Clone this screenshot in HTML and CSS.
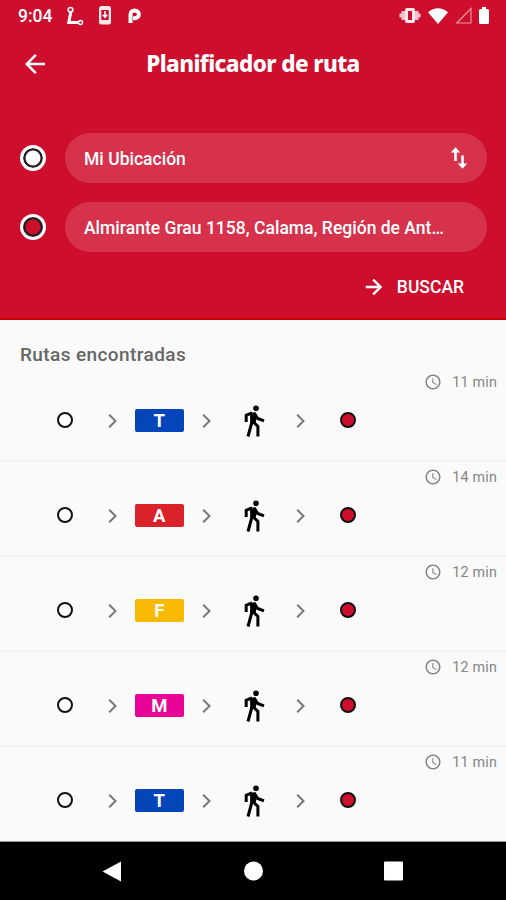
FILE: index.html
```html
<!DOCTYPE html>
<html lang="es">
<head>
    <meta charset="UTF-8">
    <meta name="viewport" content="width=device-width, initial-scale=1.0">
    <title>Planificador de ruta</title>
    <link rel="stylesheet" href="styles.css">
</head>
<body>
    <!-- shared icons -->
    <svg width="0" height="0" class="defs">
        <symbol id="chevron" viewBox="0 0 10 14"><path d="M1.2 .7 7.500 7l-6.300 6.300" fill="none" stroke="#777" stroke-width="2"/></symbol>
        <symbol id="walk" viewBox="0 0 22 32">
            <circle cx="12" cy="3.300" r="2.800"/>
            <path d="M6 8 11.500 7l1.500 4.500-1.500 7H6.300z"/>
            <path d="M2.200 17V10.200L8 8M8.500 15 7 20.500 4 31.500M9.300 17l4.600 4.500v10M10.500 8.500l3.200 5 6.300 2.300" fill="none" stroke="#000" stroke-width="3"/>
        </symbol>
        <symbol id="clock" viewBox="0 0 24 24"><path d="M11.990 2C6.470 2 2 6.480 2 12s4.470 10 9.990 10C17.520 22 22 17.520 22 12S17.520 2 11.990 2zM12 20c-4.420 0-8-3.580-8-8s3.580-8 8-8 8 3.580 8 8-3.580 8-8 8zm.5-13H11v6l5.250 3.150.75-1.230-4.500-2.670z"/></symbol>
        <symbol id="arrow" viewBox="0 0 24 24"><path d="M12 4l-1.410 1.410L16.170 11H4v2h12.170l-5.580 5.590L12 20l8-8z"/></symbol>
    </svg>

    <header class="planner">
        <div class="status-bar">
            <span class="time">9:04</span>
            <svg class="status-route" width="18" height="20" viewBox="0 0 18 20" fill="none" stroke="#fff">
                <circle cx="4.500" cy="3.800" r="2.300" stroke-width="1.700"/>
                <path d="M4.800 6 2.800 16.500H12" stroke-width="3"/>
                <circle cx="14.500" cy="16.500" r="2" stroke-width="1.500"/>
            </svg>
            <svg class="status-phone" width="12" height="19" viewBox="0 0 12 19">
                <rect width="12" height="18.500" rx="2.500" fill="#fff" opacity=".9"/>
                <path d="M2.300 4h7.400v10H2.300z" fill="#ce0e2d"/>
                <path d="M5.200 5h1.600v3.700H9L6 12.500 3 8.700h2.200z" fill="#fff"/>
            </svg>
            <svg class="status-parking" width="13" height="16" viewBox="0 0 13 16">
                <path d="M2.500 15V6.500a4.200 3.900 0 1 1 4.200 3.700H5" fill="none" stroke="#fff" stroke-width="4"/>
            </svg>
            <div class="system-icons">
                <svg width="22" height="15" viewBox="0 0 22 15" fill="#fff">
                    <rect x="6" y="0" width="10" height="15" rx="2" opacity=".9"/>
                    <path d="M9 3h4v9H9z" fill="#ce0e2d"/>
                    <path d="M2.500 3H6v9H2.500zM16 3h3.500v9H16zM.5 5.500h2v4h-2zM19.500 5.500h2v4h-2z" opacity=".75"/>
                </svg>
                <svg width="20" height="16" viewBox="0 0 20 16" fill="#fff"><path d="M0 4.200Q10-3.500 20 4.200L10 16z"/></svg>
                <svg width="17" height="17" viewBox="0 0 17 17" fill="none" stroke="#fff" opacity=".55"><path d="M16 1.500V16H1.700z" stroke-width="1.200"/></svg>
                <svg width="10" height="17" viewBox="0 0 10 17" fill="#fff"><path d="M3 0h4v2h1.500A1.500 1.500 0 0 1 10 3.500v12A1.500 1.500 0 0 1 8.500 17h-7A1.500 1.500 0 0 1 0 15.500v-12A1.500 1.500 0 0 1 1.500 2H3z"/></svg>
            </div>
        </div>

        <div class="title-bar">
            <svg class="back" width="30" height="30" viewBox="0 0 24 24"><use href="#arrow"/></svg>
            <h1>Planificador de ruta</h1>
        </div>

        <div class="field">
            <span class="marker"></span>
            <div class="input">
                <span class="input-text">Mi Ubicación</span>
                <svg class="swap" width="18" height="24" viewBox="0 0 18 24">
                    <path d="M5.500 15V4M12.500 9.500V20" fill="none" stroke="#fff" stroke-width="2.600"/>
                    <path d="M.8 6.500 5.500 1.200l4.700 5.300zM7.800 17.500l4.700 5.300 4.700-5.300z" fill="#fff"/>
                </svg>
            </div>
        </div>
        <div class="field">
            <span class="marker marker-end"></span>
            <div class="input">
                <span class="input-text">Almirante Grau 1158, Calama, Región de Ant…</span>
            </div>
        </div>

        <div class="search">
            <svg width="24" height="24" viewBox="0 0 24 24" fill="#fff" stroke="#fff" stroke-width=".5"><use href="#arrow"/></svg>
            <span class="search-label">BUSCAR</span>
        </div>
    </header>

    <main>
        <h2>Rutas encontradas</h2>
        <div id="routes"></div>
    </main>

    <nav class="android-nav">
        <svg width="20" height="21" viewBox="0 0 20 21" fill="#fff"><path d="M19 .5v20L.5 10.500z"/></svg>
        <svg width="20" height="20" viewBox="0 0 20 20" fill="#fff"><circle cx="10.500" cy="10" r="9.500"/></svg>
        <svg width="20" height="20" viewBox="0 0 20 20" fill="#fff"><rect y=".5" width="19" height="19" rx="1"/></svg>
    </nav>

    <script src="routes.js"></script>
</body>
</html>
```
FILE: styles.css
```css
* {
    box-sizing: border-box;
}
body {
    margin: 0;
    height: 900px;
    display: flex;
    flex-direction: column;
    overflow: hidden;
    background: #fafafa;
    font-family: Roboto, sans-serif;
}
svg {
    display: block;
    flex-shrink: 0;
}
.defs {
    position: absolute;
}
.planner {
    height: 320px;
    flex-shrink: 0;
    background: #ce0e2d;
    border-bottom: 2px solid #cb0008;
    color: #fff;
}
.status-bar {
    display: flex;
    align-items: center;
    height: 31px;
    padding: 0 17px 0 18px;
}
.time {
    width: 48px;
    font-size: 17.500px;
    font-weight: 500;
    line-height: 32px;
}
.status-phone {
    margin-left: 15px;
}
.status-parking {
    margin-left: 17px;
}
.system-icons {
    display: flex;
    align-items: center;
    gap: 7px;
    margin-left: auto;
}
.title-bar {
    display: grid;
    grid-template-columns: 30px 1fr 30px;
    align-items: center;
    height: 66px;
    padding: 0 20px;
}
.back {
    fill: #fff;
    transform: rotate(180deg);
}
h1 {
    margin: 0;
    text-align: center;
    font-family: "Noto Sans", sans-serif;
    font-size: 22.500px;
    font-weight: 800;
    letter-spacing: -.6px;
    line-height: 30px;
    white-space: nowrap;
}
.field {
    display: flex;
    align-items: center;
    gap: 19px;
    height: 50px;
    padding: 0 19px 0 20px;
    margin-bottom: 19px;
}
.title-bar + .field {
    margin-top: 36px;
}
.marker {
    width: 26px;
    height: 26px;
    border: 3px solid #fff;
    border-radius: 50%;
    background: #fff;
    box-shadow: inset 0 0 0 2.500px #222;
}
.marker-end {
    background: #ce0e2d;
}
.input {
    flex: 1;
    display: flex;
    align-items: center;
    justify-content: space-between;
    height: 50px;
    padding: 0 19px;
    border-radius: 25px;
    background: #d6324b;
}
.input-text {
    padding-top: 2px;
    font-size: 17.550px;
    font-weight: 500;
    line-height: 24px;
    white-space: nowrap;
}
.search {
    display: flex;
    align-items: center;
    justify-content: flex-end;
    gap: 11px;
    padding: 1px 42px 0 0;
    font-size: 17.500px;
    font-weight: 500;
    line-height: 27px;
}
.search-label {
    padding-top: 2px;
}
main {
    height: 522px;
    flex-shrink: 0;
    overflow: hidden;
    border-bottom: 1px solid #999;
}
h2 {
    margin: 0;
    padding: 22px 20px 0;
    height: 47px;
    color: #666;
    font-size: 19px;
    font-weight: 500;
    letter-spacing: .4px;
    line-height: 26px;
}
.route {
    height: 95px;
    border-bottom: 2px solid #f3f3f3;
}
.duration {
    display: flex;
    align-items: center;
    justify-content: flex-end;
    gap: 10px;
    height: 30px;
    padding-right: 9px;
    color: #858585;
    font-size: 14.300px;
    letter-spacing: .2px;
}
.duration svg {
    fill: #858585;
}
.steps {
    display: grid;
    grid-template-columns: repeat(7, 47.100px);
    justify-items: center;
    align-items: center;
    height: 46px;
    margin-left: 41.500px;
}
.chevron {
    margin: 1px 0 0 1px;
}
.walk {
    margin: 2px 0 0 3px;
}
.stop {
    width: 16px;
    height: 16px;
    border: 2px solid #111;
    border-radius: 50%;
    background: #fff;
}
.stop-end {
    background: #ce0e2d;
}
.line {
    width: 49px;
    height: 23px;
    border-radius: 2px;
    color: #fff;
    font-size: 18.500px;
    font-weight: 700;
    line-height: 24px;
    text-align: center;
}
.line-t { background: #0445b9; }
.line-a { background: #da222b; }
.line-f { background: #f8b900; }
.line-m { background: #e80296; }
.android-nav {
    flex: 1;
    display: flex;
    align-items: center;
    justify-content: center;
    gap: 121px;
    background: #000;
}
```
FILE: routes.js
```js
const routes = [
    { line: 'T', minutes: 11 },
    { line: 'A', minutes: 14 },
    { line: 'F', minutes: 12 },
    { line: 'M', minutes: 12 },
    { line: 'T', minutes: 11 }
];

const chevron = '<svg class="chevron" width="10" height="14"><use href="#chevron"/></svg>';

document.getElementById('routes').innerHTML = routes.map(route => `
    <div class="route">
        <div class="duration">
            <svg width="18" height="18" viewBox="0 0 24 24"><use href="#clock"/></svg>
            <span>${route.minutes} min</span>
        </div>
        <div class="steps">
            <span class="stop"></span>
            ${chevron}
            <span class="line line-${route.line.toLowerCase()}">${route.line}</span>
            ${chevron}
            <svg class="walk" width="22" height="32"><use href="#walk"/></svg>
            ${chevron}
            <span class="stop stop-end"></span>
        </div>
    </div>
`).join('');
```
